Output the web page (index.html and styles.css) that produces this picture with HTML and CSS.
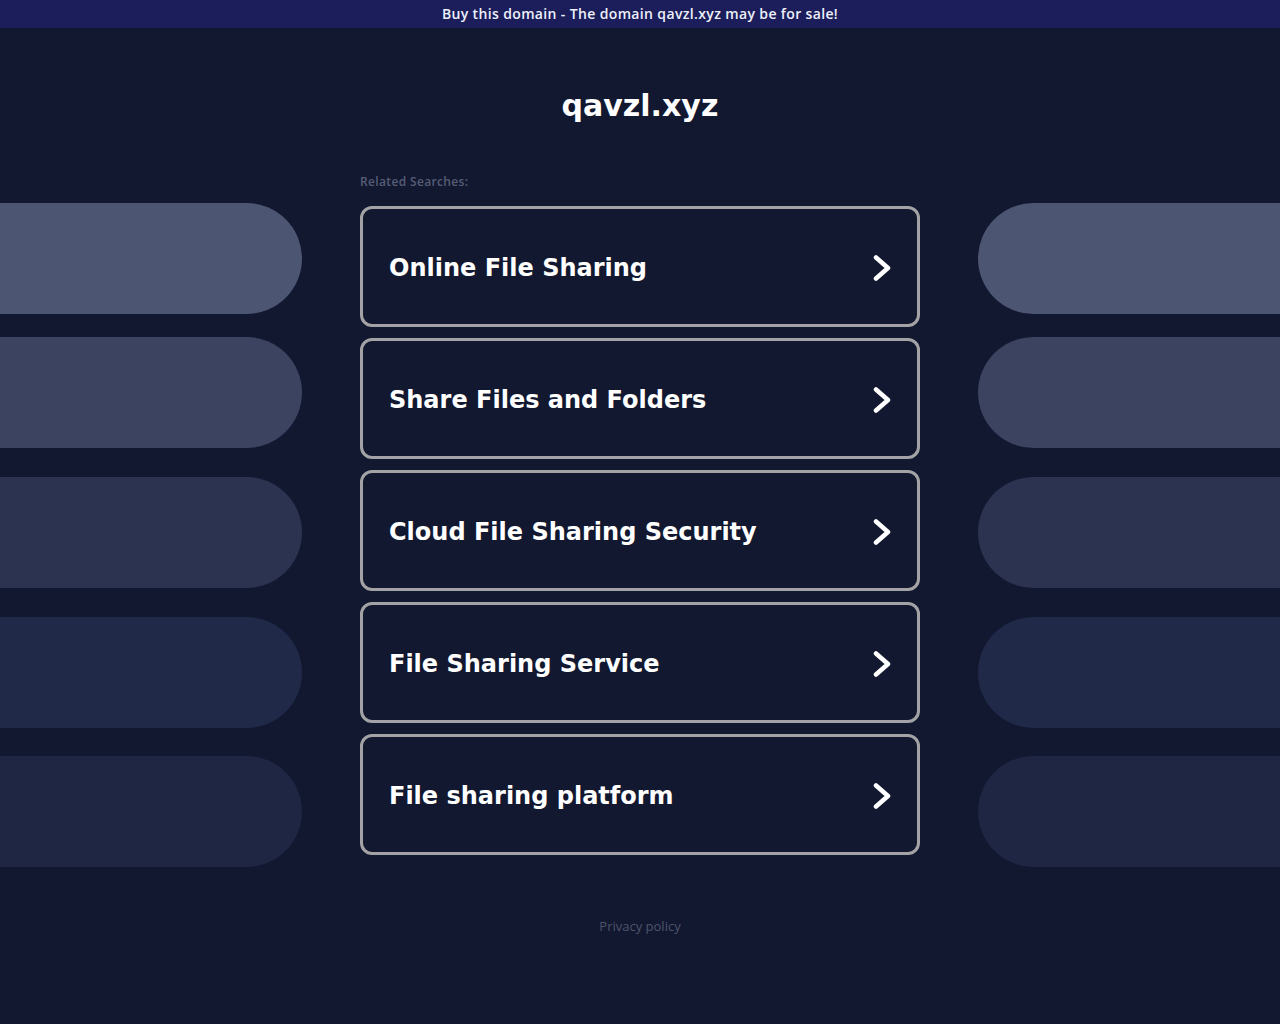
FILE: index.html
```html
<!DOCTYPE html>
<html lang="en">
<head>
  <meta charset="UTF-8" />
  <title>qavzl.xyz</title>
  <link rel="stylesheet" href="styles.css">
</head>
<body>
  <div class="sale-bar">Buy this domain - The domain qavzl.xyz may be for sale!</div>

  <header class="domain-head">
    <h1>qavzl.xyz</h1>
  </header>

  <main class="layout">
    <div class="side">
      <div class="pill p1"></div>
      <div class="pill p2"></div>
      <div class="pill p3"></div>
      <div class="pill p4"></div>
      <div class="pill p5"></div>
    </div>

    <section class="related">
      <p class="related-title">Related Searches:</p>
      <a class="link-card" href="#">
        <span>Online File Sharing</span>
        <svg class="chev" viewBox="0 0 18 30" width="18" height="30"><path d="M3 4.5 L15 15 L3 25.5" /></svg>
      </a>
      <a class="link-card" href="#">
        <span>Share Files and Folders</span>
        <svg class="chev" viewBox="0 0 18 30" width="18" height="30"><path d="M3 4.5 L15 15 L3 25.5" /></svg>
      </a>
      <a class="link-card" href="#">
        <span>Cloud File Sharing Security</span>
        <svg class="chev" viewBox="0 0 18 30" width="18" height="30"><path d="M3 4.5 L15 15 L3 25.5" /></svg>
      </a>
      <a class="link-card" href="#">
        <span>File Sharing Service</span>
        <svg class="chev" viewBox="0 0 18 30" width="18" height="30"><path d="M3 4.5 L15 15 L3 25.5" /></svg>
      </a>
      <a class="link-card" href="#">
        <span>File sharing platform</span>
        <svg class="chev" viewBox="0 0 18 30" width="18" height="30"><path d="M3 4.5 L15 15 L3 25.5" /></svg>
      </a>
    </section>

    <div class="side right">
      <div class="pill p1"></div>
      <div class="pill p2"></div>
      <div class="pill p3"></div>
      <div class="pill p4"></div>
      <div class="pill p5"></div>
    </div>
  </main>

  <footer class="foot">
    <a href="#">Privacy policy</a>
  </footer>
</body>
</html>
```

FILE: styles.css
```css
:root {
  --bg: #121830;
  --bar: #1b1e5a;
  --border: #a3a3a6;
}

* {
  box-sizing: border-box;
}

body, html {
  margin: 0;
  background-color: var(--bg);
  color: #fff;
  font-family: 'DejaVu Sans', sans-serif;
}

.sale-bar {
  height: 28px;
  line-height: 28px;
  background: var(--bar);
  text-align: center;
  font-family: 'Open Sans', sans-serif;
  font-weight: 600;
  font-size: 14px;
  letter-spacing: 0.36px;
  color: #eef0fa;
}

.domain-head {
  height: 142px;
  padding-top: 59px;
  text-align: center;
}

.domain-head h1 {
  margin: 0;
  font-size: 30px;
  line-height: 38px;
  font-weight: bold;
}

.layout {
  display: grid;
  grid-template-columns: 302px 560px 302px;
  column-gap: 58px;
}

.side {
  display: flex;
  flex-direction: column;
  padding-top: 33px;
}

.pill {
  height: 111px;
  border-radius: 0 56px 56px 0;
}

.side.right .pill {
  border-radius: 56px 0 0 56px;
}

.pill.p1 { background: #4c5572; margin-bottom: 23px; }
.pill.p2 { background: #3b4360; margin-bottom: 29px; }
.pill.p3 { background: #2b3351; margin-bottom: 29px; }
.pill.p4 { background: #212948; margin-bottom: 28px; }
.pill.p5 { background: #1e2644; }

.related-title {
  margin: 0 0 17px;
  padding-top: 3px;
  height: 19px;
  font-family: 'Open Sans', sans-serif;
  font-size: 12px;
  font-weight: 600;
  letter-spacing: 0.35px;
  color: #565d76;
}

.link-card {
  display: flex;
  align-items: center;
  justify-content: space-between;
  height: 121px;
  margin-bottom: 11px;
  padding: 2px 26px 0 26px;
  border: 3px solid var(--border);
  border-radius: 12px;
  color: #fff;
  text-decoration: none;
  font-size: 24px;
  font-weight: bold;
}

.link-card:last-child {
  margin-bottom: 0;
}

.chev {
  fill: none;
  stroke: #fff;
  stroke-width: 4.5;
  stroke-linecap: round;
  stroke-linejoin: round;
}

.foot {
  padding-top: 50px;
  text-align: center;
  font-size: 13px;
}

.foot a {
  color: #4d546c;
  text-decoration: none;
  font-family: 'Open Sans', sans-serif;
}
```
